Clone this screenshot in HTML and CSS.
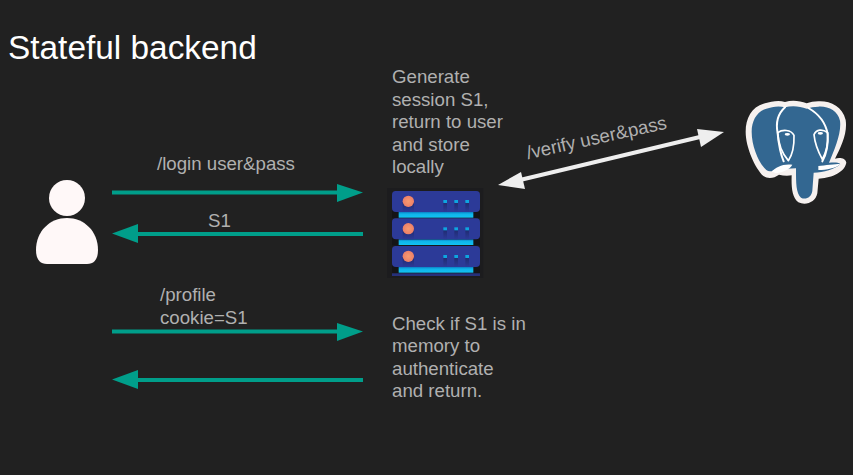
FILE: index.html
```html
<!DOCTYPE html>
<html lang="en">
<head>
<meta charset="utf-8">
<title>Stateful backend</title>
<link rel="stylesheet" href="styles.css">
</head>
<body>
<main class="slide">
  <h1 class="title">Stateful backend</h1>

  <svg class="layer" viewBox="0 0 853 475" aria-hidden="true">
    <g class="flow">
      <rect x="112" y="190.500" width="228" height="4"/><polygon points="337,184 363,192.500 337,202"/>
      <rect x="135" y="232" width="228" height="4"/><polygon points="112,233.500 138,224 138,243"/>
      <rect x="112" y="329.500" width="228" height="4"/><polygon points="337,323 363,331.500 337,341"/>
      <rect x="135" y="378" width="228" height="4"/><polygon points="112,379.500 138,370 138,389"/>
    </g>
    <g class="link">
      <line x1="520" y1="180" x2="702" y2="136.500" />
      <polygon points="498,185 521,172 525,189"/>
      <polygon points="724,132 697,129 701,147"/>
    </g>
  </svg>

  <svg class="user" viewBox="0 0 100 100" aria-hidden="true">
    <circle cx="47" cy="28" r="18"/>
    <path d="M16 80C16 61 30 48 47 48C64 48 78 61 78 80C78 88 75 94 67 94H27C19 94 16 88 16 80Z"/>
  </svg>

  <svg class="server" viewBox="0 0 330 315" aria-hidden="true">
    <defs>
      <linearGradient id="glow" x1="0" y1="0" x2="0" y2="1">
        <stop offset="0" stop-color="#0c7fc4"/>
        <stop offset="0.35" stop-color="#0fb4ea"/>
        <stop offset="1" stop-color="#12c2f2"/>
      </linearGradient>
      <linearGradient id="fade" x1="0" y1="0" x2="0" y2="1">
        <stop offset="0" stop-color="#1f2a6e"/>
        <stop offset="1" stop-color="#2c3a98"/>
      </linearGradient>
      <radialGradient id="led">
        <stop offset="0" stop-color="#f79a70"/>
        <stop offset="1" stop-color="#ec7f68"/>
      </radialGradient>
    </defs>
    <rect class="sv-bg" x="22" y="24" width="288" height="270"/>
    <g id="unit">
      <rect class="sv-notch" x="36" y="90" width="264" height="24"/>
      <rect class="sv-glow" x="56" y="96" width="224" height="17"/>
      <path class="sv-body" d="M36 44Q36 33 47 33H289Q300 33 300 44V84Q300 96 288 96H48Q36 96 36 84Z"/>
      <rect class="sv-shade" x="68" y="66" width="34" height="30"/>
      <rect class="sv-shade" x="190" y="66" width="11" height="30"/>
      <rect class="sv-shade" x="223" y="66" width="11" height="30"/>
      <rect class="sv-shade" x="256" y="66" width="11" height="30"/>
      <circle class="sv-led" cx="85" cy="64" r="17"/>
      <rect class="sv-dot" x="190" y="60" width="11" height="9"/>
      <rect class="sv-dot" x="223" y="60" width="11" height="9"/>
      <rect class="sv-dot" x="256" y="60" width="11" height="9"/>
    </g>
    <use href="#unit" y="82"/>
    <use href="#unit" y="165"/>
    <rect class="sv-foot" x="36" y="280" width="264" height="8"/>
  </svg>

  <svg class="elephant" viewBox="0 0 354 360" aria-hidden="true">
    <path class="pg-halo" d="M90 40C50 50 32 85 32 125C32 172 60 234 85 258C100 268 118 264 132 254C145 258 160 258 170 256C169 288 170 320 190 337C212 348 242 337 247 310L251 266C280 264 327 252 334 218C332 203 312 202 300 206C318 170 338 130 332 90C322 48 285 32 250 34C236 34 226 36 215 40C194 32 170 30 150 36C130 30 108 35 90 40Z"/>
    <path class="pg-fill" d="M94 56C66 64 50 92 50 125C50 170 72 220 94 240C104 248 116 243 126 233C140 237 160 237 183 235C183 280 183 310 198 323C212 330 230 322 232 302L236 248C266 248 300 238 316 222C308 216 296 218 282 218C298 180 320 130 315 92C308 62 280 48 250 50C236 50 226 52 215 56C194 48 170 46 150 52C130 46 110 51 94 56Z"/>
    <path class="pg-line" d="M150 52C128 72 122 100 128 130C132 172 140 200 146 214M220 54C252 72 272 100 278 132C280 165 272 196 262 214"/>
    <path class="pg-line thin" d="M128 128C142 118 168 118 177 136C178 170 172 195 160 212C146 196 130 165 128 128ZM278 128C262 116 244 118 237 134C240 165 252 190 262 208C272 190 280 160 278 128Z"/>
    <path class="pg-tooth" d="M110 244C122 232 144 220 172 224C164 238 146 246 122 250Z"/>
    <path class="pg-tooth" d="M250 228C270 226 300 222 316 222C304 234 274 240 250 240Z"/>
    <ellipse class="pg-eye" cx="157" cy="133" rx="8" ry="4"/>
    <ellipse class="pg-eye" cx="256" cy="130" rx="8" ry="4"/>
  </svg>

  <p class="label at-login">/login user&amp;pass</p>
  <p class="label at-s1">S1</p>
  <p class="label at-profile">/profile<br>cookie=S1</p>
  <p class="label at-verify">/verify user&amp;pass</p>
  <p class="label at-generate">Generate<br>session S1,<br>return to user<br>and store<br>locally</p>
  <p class="label at-check">Check if S1 is in<br>memory to<br>authenticate<br>and return.</p>
</main>
</body>
</html>
```

FILE: styles.css
```css
html, body {
  margin: 0;
  padding: 0;
  background: #212121;
}

.slide {
  position: relative;
  width: 853px;
  height: 475px;
  overflow: hidden;
  background: #212121;
  font-family: "Liberation Sans", Arial, sans-serif;
}

.title {
  position: absolute;
  left: 8px;
  top: 29px;
  margin: 0;
  font-size: 33.4px;
  font-weight: 400;
  line-height: 38px;
  color: #ffffff;
}

.layer {
  position: absolute;
  left: 0;
  top: 0;
  width: 853px;
  height: 475px;
}

.flow rect, .flow polygon { fill: #009e8a; }
.link line { stroke: #eeeeee; stroke-width: 4; }
.link polygon { fill: #eeeeee; }

.label {
  position: absolute;
  margin: 0;
  font-size: 18.67px;
  line-height: 22.5px;
  color: #b0b0b0;
  white-space: nowrap;
}

.at-login { left: 157px; top: 153px; }
.at-s1 { left: 208px; top: 210px; }
.at-profile { left: 160px; top: 284px; }
.at-generate { left: 392px; top: 66px; }
.at-check { left: 392px; top: 312.500px; }
.at-verify {
  left: 525px;
  top: 127px;
  transform: rotate(-12.500deg);
}

.user {
  position: absolute;
  left: 20px;
  top: 170px;
  width: 100px;
  height: 100px;
  fill: #fff8f8;
}

.server {
  position: absolute;
  left: 380px;
  top: 180px;
  width: 110px;
  height: 105px;
}

.sv-bg { fill: #1c1c1e; }
.sv-notch { fill: #141416; }
.sv-body { fill: #2c3a98; }
.sv-glow { fill: url(#glow); }
.sv-shade { fill: url(#fade); }
.sv-led { fill: url(#led); }
.sv-dot { fill: #0ea5e0; }
.sv-foot { fill: #26307a; }

.elephant {
  position: absolute;
  left: 735px;
  top: 90px;
  width: 118px;
  height: 120px;
}

.pg-halo { fill: #f6f1ef; }
.pg-fill { fill: #336791; }
.pg-line { fill: none; stroke: #ffffff; stroke-width: 6; stroke-linejoin: round; stroke-linecap: round; }
.pg-line.thin { stroke-width: 5; }
.pg-tooth { fill: #ffffff; }
.pg-eye { fill: #ffffff; }
```
